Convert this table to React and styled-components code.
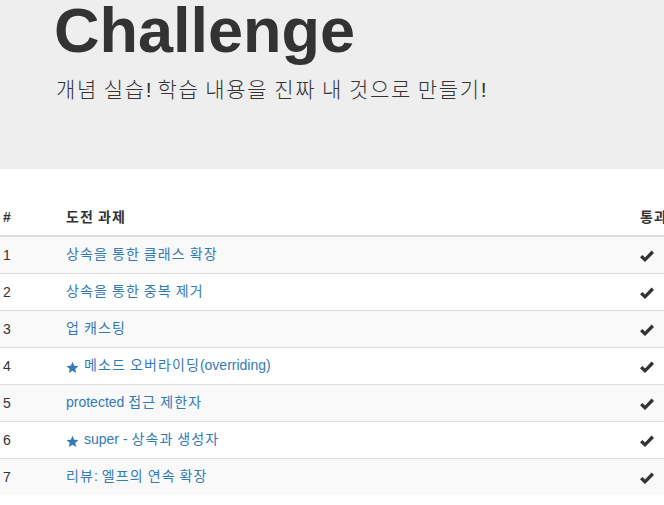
import React from "react";
import styled, { createGlobalStyle } from "styled-components";

const GlobalStyle = createGlobalStyle`
  html, body {
    margin: 0;
    padding: 0;
    background: #fff;
    overflow: hidden;
  }
  body {
    font-family: "Liberation Sans", "Noto Sans CJK KR", sans-serif;
    font-size: 14px;
    line-height: 1.42857;
    color: #333;
  }
`;

const challenges = [
  { title: "상속을 통한 클래스 확장" },
  { title: "상속을 통한 중복 제거" },
  { title: "업 캐스팅" },
  { title: "메소드 오버라이딩(overriding)", star: true },
  { title: "protected 접근 제한자" },
  { title: "super - 상속과 생성자", star: true },
  { title: "리뷰: 엘프의 연속 확장" },
];

// hangul glyphs run a bit wider in the original font
const Hangul = styled.span`
  letter-spacing: 0.08em;
`;

const Text = styled.span`
  white-space: pre;
`;

const Ko = ({ children }) => (
  <Text>
    {children
      .split(/([\uac00-\ud7a3]+)/)
      .map((part, i) => (i % 2 ? <Hangul key={i}>{part}</Hangul> : part))}
  </Text>
);

const Jumbotron = styled.div`
  background: #eee;
  padding: 0 0 49px 54px;
  margin-bottom: 30px;
`;

const Title = styled.h1`
  margin: -4px 0 10px;
  font-size: 63px;
  line-height: 1.1;
  font-weight: 700;
  color: #333;
`;

const Lead = styled.p`
  margin: 0 0 15px 2px;
  font-size: 21px;
  line-height: 30px;
  font-weight: 200;
  color: #333;
  white-space: nowrap;
`;

const Table = styled.table`
  width: 730px;
  margin-left: -5px;
  border-collapse: collapse;
  border-spacing: 0;
`;

const Th = styled.th`
  text-align: left;
  font-weight: 700;
  padding: 8px;
  border-bottom: 2px solid #ddd;
  vertical-align: bottom;
  white-space: nowrap;
  width: ${(p) => p.$w || "auto"};
`;

const Tr = styled.tr`
  background: ${(p) => (p.$striped ? "#f9f9f9" : "#fff")};
`;

const Td = styled.td`
  padding: 8px;
  border-top: 1px solid #ddd;
  vertical-align: top;
  white-space: nowrap;
`;

const Cell = styled.div`
  height: 20px;
  display: flex;
  align-items: center;
  line-height: 20px;
`;

const Link = styled.a`
  color: #337ab7;
  text-decoration: none;
  display: flex;
  align-items: center;
  height: 20px;
`;

const Star = styled.svg`
  width: 13px;
  height: 13px;
  margin: 3px 5px 0 0;
  fill: #337ab7;
  flex: none;
`;

const Check = styled.svg`
  width: 14px;
  height: 12px;
  margin-top: 2px;
  fill: #333;
`;

const StarIcon = () => (
  <Star viewBox="0 0 24 24">
    <path d="M12 1.5l3.1 7.3 7.9.6-6 5.2 1.9 7.7L12 18.2l-6.9 4.1L7 14.6 1 9.4l7.9-.6z" />
  </Star>
);

const CheckIcon = () => (
  <Check viewBox="0 0 14 12">
    <polygon points="0,7.3 2.4,4.9 5,7.4 11.6,0.6 14,3 5,12" />
  </Check>
);

export default function App() {
  return (
    <>
      <GlobalStyle />
      <Jumbotron>
        <Title>Challenge</Title>
        <Lead>
          <Ko>개념 실습! 학습 내용을 진짜 내 것으로 만들기!</Ko>
        </Lead>
      </Jumbotron>
      <Table>
        <thead>
          <tr>
            <Th $w="47px">
              <Cell>#</Cell>
            </Th>
            <Th $w="558px">
              <Cell>
                <Ko>도전 과제</Ko>
              </Cell>
            </Th>
            <Th>
              <Cell>
                <Ko>통과</Ko>
              </Cell>
            </Th>
          </tr>
        </thead>
        <tbody>
          {challenges.map((c, i) => (
            <Tr key={i} $striped={i % 2 === 0}>
              <Td>
                <Cell>{i + 1}</Cell>
              </Td>
              <Td>
                <Link href="#">
                  {c.star && <StarIcon />}
                  <Ko>{c.title}</Ko>
                </Link>
              </Td>
              <Td>
                <Cell>
                  <CheckIcon />
                </Cell>
              </Td>
            </Tr>
          ))}
        </tbody>
      </Table>
    </>
  );
}
